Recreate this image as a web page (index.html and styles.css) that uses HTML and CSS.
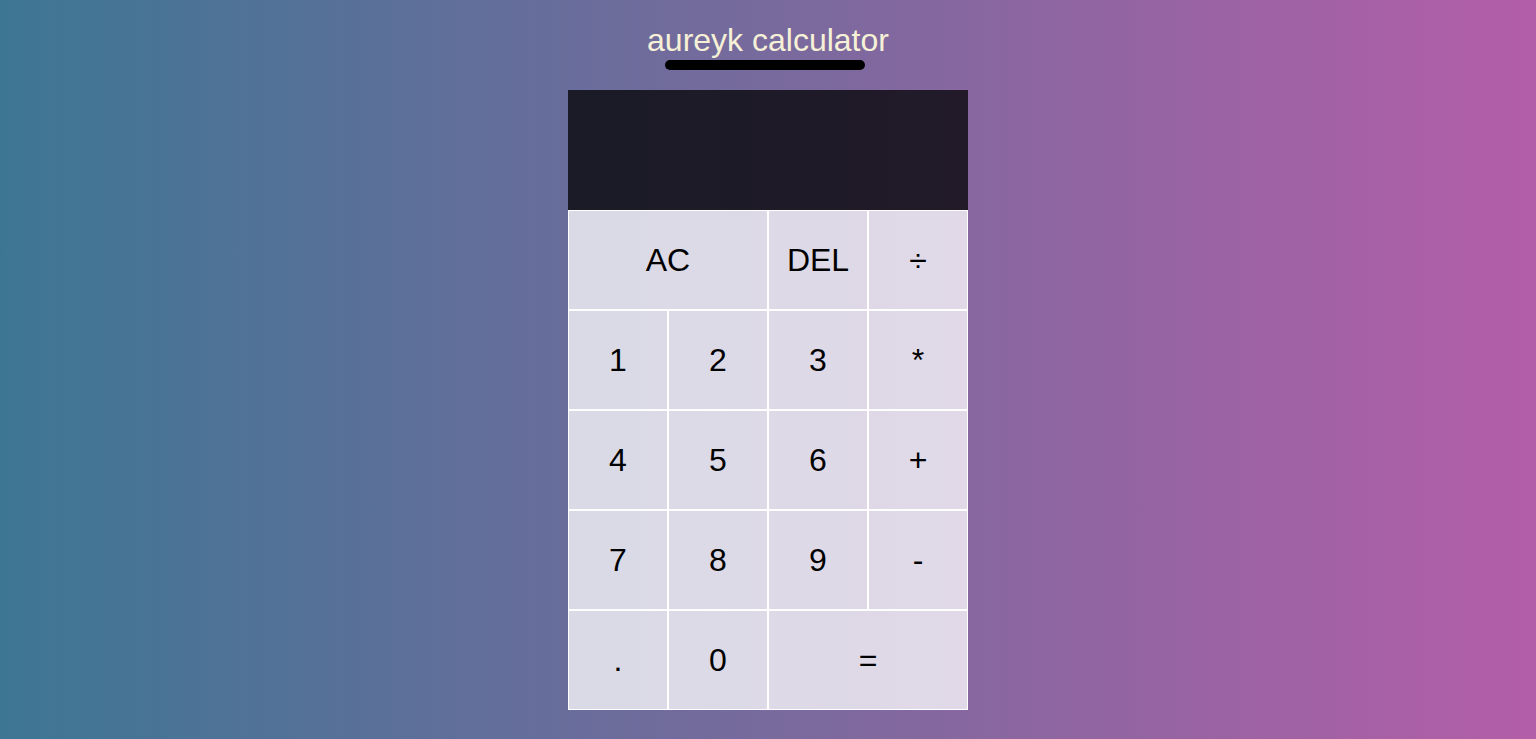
FILE: index.html
```html
<!DOCTYPE html>
<html>
<head>
<meta charset="utf-8">
<title>aureyk calculator</title>
<link rel="stylesheet" href="styles.css">
</head>
<body>
<header class="header">
  <h1 class="title">aureyk calculator</h1>
  <div class="bar"></div>
</header>
<main class="calculator">
  <div class="output"></div>
  <button class="key span-two">AC</button>
  <button class="key">DEL</button>
  <button class="key">÷</button>
  <button class="key">1</button>
  <button class="key">2</button>
  <button class="key">3</button>
  <button class="key">*</button>
  <button class="key">4</button>
  <button class="key">5</button>
  <button class="key">6</button>
  <button class="key">+</button>
  <button class="key">7</button>
  <button class="key">8</button>
  <button class="key">9</button>
  <button class="key">-</button>
  <button class="key">.</button>
  <button class="key">0</button>
  <button class="key span-two">=</button>
</main>
</body>
</html>
```
FILE: styles.css
```css
*, *::before, *::after {
  box-sizing: border-box;
}

html, body {
  margin: 0;
  padding: 0;
  height: 100%;
}

body {
  background: linear-gradient(to right, #3d7693, #b35ea8);
  font-family: "Liberation Sans", Arial, sans-serif;
  overflow: hidden;
}

.header {
  display: flex;
  flex-direction: column;
  align-items: center;
  padding-top: 22px;
}

.title {
  margin: 0;
  font-size: 32px;
  font-weight: normal;
  line-height: 37px;
  color: #f6f1d6;
}

.bar {
  width: 200px;
  height: 10px;
  margin-top: 1px;
  margin-right: 6px;
  background: #000;
  border-radius: 5px;
}

.calculator {
  display: grid;
  justify-content: center;
  grid-template-columns: repeat(4, 100px);
  grid-template-rows: 120px repeat(5, 100px);
  margin-top: 20px;
}

.output {
  grid-column: 1 / -1;
  background: rgba(0, 0, 0, 0.75);
}

.key {
  font-family: "Liberation Sans", Arial, sans-serif;
  font-size: 32px;
  color: #000;
  border: 1px solid #fff;
  background: rgba(255, 255, 255, 0.75);
  outline: none;
  padding: 0;
  cursor: pointer;
}

.span-two {
  grid-column: span 2;
}
```
